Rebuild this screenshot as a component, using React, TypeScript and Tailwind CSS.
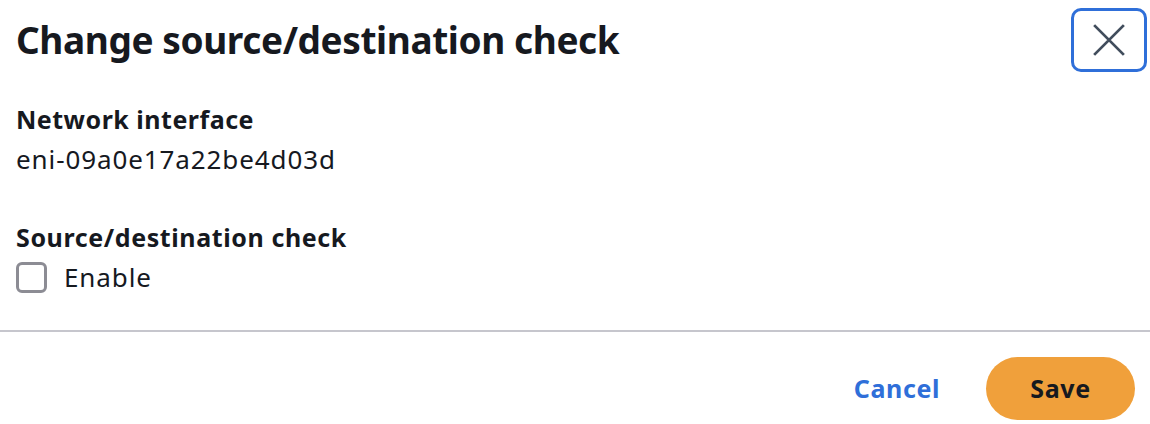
export default function App() {
  return (
    <div className="w-[1150px] h-[424px] bg-white text-[#16191f] font-['Noto_Sans',sans-serif] flex flex-col">
      {/* Header */}
      <div className="flex items-start justify-between pl-4 pr-[3px] pt-2">
        <h2 className="text-[37px] leading-[64px] font-bold tracking-[-0.4px]">
          Change source/destination check
        </h2>
        <button className="w-[76px] h-[64px] border-[3px] border-[#2f6fd9] rounded-[10px] flex items-center justify-center text-[#414d5c]">
          <svg width="34" height="34" viewBox="0 0 16 16" fill="none" stroke="currentColor" strokeWidth="1.3">
            <path d="M1 1l14 14M15 1L1 15" />
          </svg>
        </button>
      </div>

      {/* Body */}
      <div className="px-4 pt-[27px] flex flex-col">
        <div className="text-[25px] font-bold leading-[40px] tracking-[0.5px]">Network interface</div>
        <div className="text-[26px] leading-[40px] tracking-[0.9px]">eni-09a0e17a22be4d03d</div>

        <div className="mt-[38px] text-[25px] font-bold leading-[40px] tracking-[0.6px]">Source/destination check</div>
        <label className="flex items-center gap-[17px] h-[40px]">
          <span className="w-[31px] h-[31px] border-[3px] border-[#8c8c94] rounded-[6px]" />
          <span className="text-[26px] tracking-[0.9px]">Enable</span>
        </label>
      </div>

      {/* Footer */}
      <div className="mt-auto border-t-2 border-[#c6c6cd] flex items-center justify-end gap-[46px] pr-[15px] pt-[25px] pb-[4px]">
        <button className="text-[25px] font-bold tracking-[0.6px] text-[#2f6fd9]">Cancel</button>
        <button className="w-[149px] h-[63px] rounded-full bg-[#f0a03b] text-[25px] font-bold tracking-[0.6px]">Save</button>
      </div>
    </div>
  );
}
